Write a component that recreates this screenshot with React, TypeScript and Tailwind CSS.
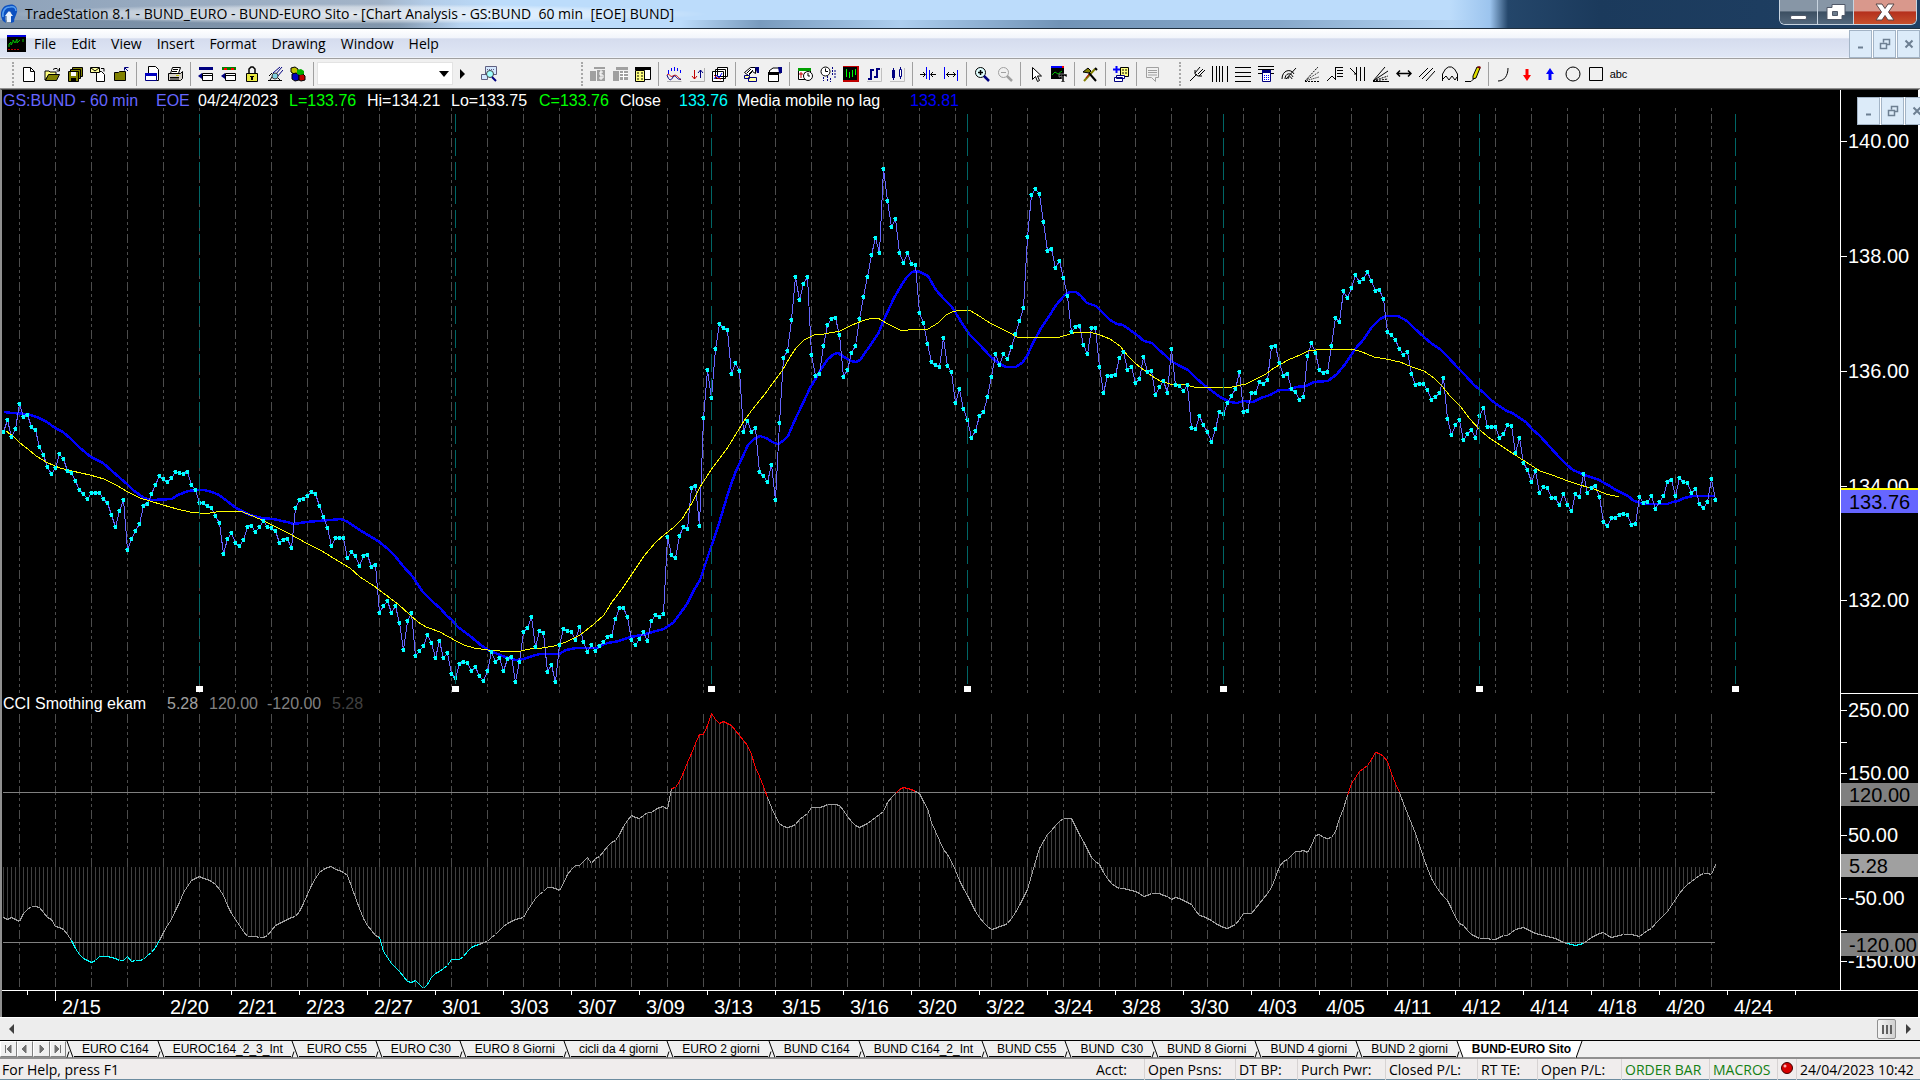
import React from "react";

// one price per bar, bars are 4px apart (values are chart y coordinates)
const PRICES = [
  432, 420, 437, 429, 404, 417, 415, 427, 430, 447, 455, 467, 474, 468, 454, 459, 471, 473, 481, 490,
  494, 499, 493, 493, 493, 499, 503, 515, 527, 511, 500, 550, 539, 531, 524, 506, 504, 494, 485, 476,
  479, 482, 478, 472, 473, 474, 472, 485, 490, 503, 503, 506, 508, 516, 523, 554, 539, 533, 543, 546,
  540, 527, 526, 532, 527, 521, 527, 528, 531, 543, 540, 539, 548, 508, 500, 499, 496, 492, 494, 506,
  517, 528, 546, 538, 538, 538, 558, 552, 556, 566, 556, 555, 567, 565, 613, 606, 601, 613, 606, 623,
  650, 621, 613, 656, 651, 646, 635, 643, 658, 641, 658, 653, 674, 678, 664, 662, 663, 671, 667, 676,
  681, 671, 652, 662, 658, 671, 659, 657, 682, 662, 632, 628, 617, 647, 631, 633, 672, 665, 682, 645,
  629, 631, 632, 640, 627, 642, 652, 645, 651, 646, 642, 637, 636, 619, 608, 608, 617, 640, 645, 639,
  632, 641, 621, 615, 617, 614, 537, 555, 558, 536, 527, 529, 488, 486, 526, 418, 370, 398, 349, 324,
  328, 330, 374, 363, 371, 432, 421, 432, 428, 472, 476, 482, 465, 500, 423, 358, 351, 320, 277, 300,
  284, 277, 355, 376, 374, 346, 325, 319, 318, 335, 377, 370, 353, 346, 319, 297, 277, 255, 238, 253,
  169, 201, 227, 219, 253, 263, 253, 264, 265, 313, 323, 344, 362, 365, 367, 338, 366, 372, 403, 389,
  409, 420, 438, 431, 416, 412, 397, 377, 354, 365, 354, 359, 347, 334, 321, 308, 237, 195, 189, 194,
  222, 251, 249, 268, 261, 278, 296, 332, 327, 326, 345, 354, 328, 328, 367, 393, 376, 376, 375, 358,
  352, 370, 367, 383, 379, 357, 372, 371, 395, 387, 381, 393, 349, 385, 386, 391, 385, 428, 429, 416,
  425, 432, 442, 429, 412, 414, 403, 396, 389, 372, 412, 411, 393, 393, 382, 384, 380, 347, 346, 363,
  376, 374, 389, 392, 400, 397, 356, 343, 353, 370, 373, 372, 346, 318, 322, 291, 298, 288, 275, 282,
  279, 272, 281, 291, 290, 299, 332, 335, 340, 349, 355, 352, 374, 385, 384, 384, 390, 400, 397, 393,
  378, 419, 435, 425, 420, 440, 434, 430, 438, 416, 408, 427, 427, 427, 438, 434, 425, 426, 453, 438,
  463, 470, 482, 471, 493, 487, 488, 498, 498, 505, 494, 505, 511, 494, 497, 474, 493, 488, 486, 497,
  522, 526, 518, 518, 515, 514, 515, 525, 524, 497, 503, 502, 496, 509, 502, 496, 482, 480, 496, 478,
  482, 483, 493, 489, 504, 508, 502, 479, 500,
];

const FAST_AVERAGE =
  "4,412 12,413 27,414 37,417 47,422 55,428 63,432 70,438 80,448 91,457 103,463 112,471 120,478 127,484 133,490 144,498 152,500 172,499 178,495 188,491 197,490 204,490 212,492 219,495 227,501 236,508 250,515 262,518 273,519 287,522 294,524 306,522 318,521 330,520 341,519 348,522 358,529 368,535 378,541 388,549 395,556 403,566 413,577 423,592 433,602 440,608 447,616 452,620 458,627 470,636 482,646 488,650 500,655 508,658 516,660 524,659 532,656 540,654 559,654 566,650 576,648 597,648 602,645 608,643 619,641 630,637 642,635 656,631 664,629 668,626 673,623 679,615 687,604 694,590 700,580 704,568 711,547 717,530 723,510 730,487 736,471 742,458 748,445 754,439 760,436 766,438 772,442 778,444 783,441 788,436 794,422 803,403 810,388 816,378 823,366 828,359 834,354 838,353 844,357 851,361 856,362 860,360 867,350 878,334 883,322 887,313 894,298 901,286 907,277 912,272 917,271 922,273 928,276 936,290 944,299 952,307 960,320 970,335 980,345 990,356 998,363 1006,367 1016,367 1022,363 1027,356 1033,343 1040,330 1048,318 1056,305 1064,296 1070,292 1076,292 1081,296 1087,303 1096,306 1104,314 1110,320 1117,324 1123,325 1130,330 1137,335 1144,341 1152,343 1159,350 1165,355 1171,361 1180,366 1188,370 1196,378 1204,385 1212,391 1220,397 1230,402 1237,403 1243,401 1253,402 1261,398 1270,395 1279,390 1288,390 1296,387 1306,386 1314,382 1328,381 1337,374 1346,363 1355,349 1364,339 1372,327 1380,319 1386,316 1398,316 1407,321 1414,328 1424,337 1432,344 1440,349 1448,357 1457,367 1465,375 1474,385 1484,393 1491,400 1499,406 1507,411 1512,413 1526,422 1532,429 1540,436 1550,447 1559,457 1566,464 1573,470 1580,473 1590,477 1597,479 1608,485 1616,490 1628,496 1634,501 1644,504 1667,504 1673,502 1678,501 1684,498 1693,496 1715,496";

const SLOW_AVERAGE =
  "6,431 14,437 20,443 28,449 36,456 48,463 60,468 72,471 90,475 104,479 116,485 128,492 140,498 150,501 163,505 177,509 190,512 200,513 210,513 222,511 240,511 248,514 262,520 276,527 290,534 306,543 322,551 338,561 350,568 360,577 374,586 386,595 398,604 410,615 418,622 426,627 440,632 456,641 464,645 474,648 488,650 500,651 516,652 530,649 542,648 554,646 566,642 580,635 594,624 604,615 612,602 622,589 632,574 644,556 656,542 664,535 674,527 682,519 692,503 700,487 711,470 720,458 728,447 736,434 744,421 752,410 760,400 765,394 772,384 782,371 790,357 796,348 804,340 814,335 824,334 840,331 852,325 862,321 872,318 878,318 886,323 900,330 908,330 916,329 928,329 938,323 946,315 952,312 960,310 969,310 976,314 990,323 1000,328 1010,333 1017,337 1040,338 1060,337 1070,334 1077,332 1090,332 1100,335 1110,339 1120,346 1128,356 1136,364 1144,370 1152,376 1160,381 1170,384 1186,385 1194,387 1232,387 1246,384 1256,379 1266,374 1274,368 1288,360 1300,355 1308,351 1316,350 1346,349 1352,349 1362,352 1374,357 1386,359 1400,362 1412,367 1424,371 1434,378 1442,386 1450,396 1460,406 1470,419 1480,430 1488,437 1500,445 1512,453 1526,462 1540,471 1552,475 1568,481 1580,485 1594,489 1606,494 1619,497";

const CCI =
  "3,917 7,919 11,917 19,921 24,911 32,905 39,907 47,917 51,919 55,926 64,929 72,942 78,953 84,959 91,962 95,960 99,956 109,956 119,960 123,960 127,956 131,961 137,960 144,959 148,954 153,950 158,942 164,930 171,919 178,904 184,890 192,879 199,876 204,879 208,879 211,881 216,885 222,893 229,910 237,922 244,933 247,936 256,936 262,937 268,934 276,924 286,919 292,916 296,916 302,905 308,892 313,881 318,873 324,868 331,866 336,870 341,870 348,876 353,892 359,908 365,923 374,934 380,937 383,951 390,962 400,972 407,981 411,982 416,979 420,986 424,988 428,983 432,975 441,970 447,965 451,959 460,959 471,947 484,942 488,940 495,934 504,925 515,919 523,917 529,907 536,896 543,891 548,886 554,887 560,890 564,881 568,872 576,864 580,865 584,859 588,856 591,863 596,857 600,855 604,849 611,842 616,840 624,824 631,815 635,817 640,818 647,812 651,812 657,808 662,805 667,809 671,788 676,787 681,777 688,760 696,741 699,734 704,734 707,725 711,713 716,721 720,723 723,721 731,725 739,735 746,743 751,754 755,767 760,778 767,797 772,810 780,825 785,827 790,826 796,823 800,818 806,814 811,807 820,807 826,804 838,804 842,808 848,818 856,826 859,827 867,823 880,813 884,810 888,799 894,794 901,787 909,788 919,793 927,808 931,822 937,835 943,849 949,857 955,870 961,885 968,897 976,913 984,923 991,929 1000,926 1007,923 1014,914 1021,901 1028,887 1033,867 1039,848 1047,834 1056,824 1063,818 1071,818 1078,832 1084,843 1092,859 1099,864 1104,874 1111,883 1120,889 1124,888 1137,892 1143,896 1151,893 1158,893 1167,896 1171,899 1176,896 1184,901 1191,904 1199,915 1208,918 1220,926 1227,928 1235,924 1243,913 1251,913 1260,902 1268,892 1273,883 1280,863 1288,858 1294,851 1304,850 1308,852 1316,832 1323,837 1329,839 1334,834 1339,818 1343,808 1349,788 1352,781 1359,771 1368,764 1375,752 1380,753 1388,762 1392,777 1399,792 1407,813 1414,830 1424,860 1431,878 1440,893 1448,901 1457,922 1464,926 1470,933 1479,938 1488,938 1493,940 1502,935 1508,935 1514,929 1524,927 1535,933 1553,937 1565,943 1574,945 1585,942 1594,935 1603,932 1611,937 1622,934 1633,934 1640,936 1644,932 1651,928 1657,921 1666,912 1676,897 1685,885 1697,876 1704,873 1711,874 1715,864";

const BAR_X = PRICES.map((_, i) => 3 + i * 4);
const GRID_X = Array.from({ length: 48 }, (_, i) => 19 + i * 36);
const CYCLE_X = Array.from({ length: 7 }, (_, i) => 199 + i * 256);
const TICK_X = Array.from({ length: 25 }, (_, i) => 163 + i * 68);

const DATES = [
  "2/20", "2/21", "2/23", "2/27", "3/01", "3/03", "3/07", "3/09", "3/13", "3/15", "3/16", "3/20",
  "3/22", "3/24", "3/28", "3/30", "4/03", "4/05", "4/11", "4/12", "4/14", "4/18", "4/20", "4/24",
];

const cciPoints = CCI.split(" ").map((p) => p.split(",").map(Number));

const cciAt = (x: number) => {
  const next = cciPoints.findIndex((p) => p[0] >= x);
  if (next <= 0) return cciPoints[0][1];
  const [x0, y0] = cciPoints[next - 1];
  const [x1, y1] = cciPoints[next];
  return Math.round(y0 + ((y1 - y0) * (x - x0)) / (x1 - x0));
};

const CCI_BARS = BAR_X.map((x) => ({ x, y: cciAt(x) }));

const cciSegments = (test: (y: number) => boolean) =>
  CCI_BARS.slice(1)
    .map((bar, i) => {
      const prev = CCI_BARS[i];
      return test((bar.y + prev.y) / 2)
        ? `M${prev.x + 0.5} ${prev.y + 0.5}L${bar.x + 0.5} ${bar.y + 0.5}`
        : "";
    })
    .join("");

const pricePath = "M" + PRICES.map((y, i) => `${BAR_X[i] + 0.5} ${y}`).join("L");
const markerPath = PRICES.map(
  (y, i) => `M${BAR_X[i] - 1} ${y - 2}h3v4h-3zM${BAR_X[i] - 2} ${y - 1}h1v1h-1z`
).join("");

const Grid = ({ top, bottom, offset }: { top: number; bottom: number; offset: number }) => (
  <path
    d={GRID_X.map((x) => `M${x + 0.5} ${top}V${bottom}`).join("")}
    stroke="#4c4c4c"
    strokeDasharray="9 3 3 3 3 3"
    strokeDashoffset={offset}
  />
);

const PriceChart = () => (
  <svg
    width="1838"
    height="586"
    viewBox="2 108 1838 586"
    fill="none"
    shapeRendering="crispEdges"
    className="block shrink-0"
    role="img"
    aria-label="GS:BUND 60 min"
  >
    <Grid top={108} bottom={693} offset={18} />
    <polyline points={FAST_AVERAGE} stroke="#0000ff" strokeWidth="2.5" />
    <path d={pricePath} stroke="#6666ff" />
    <polyline points={SLOW_AVERAGE} stroke="#ffff00" />
    <path d={markerPath} fill="#00ffff" />
    {CYCLE_X.map((x) => (
      <g key={x}>
        <path d={`M${x + 0.5} 114V684`} stroke="#006666" strokeDasharray="18 6" />
        <rect x={x - 3} y="686" width="7" height="6" fill="#fff" />
      </g>
    ))}
  </svg>
);

const CciChart = () => (
  <svg
    width="1838"
    height="276"
    viewBox="2 714 1838 276"
    fill="none"
    shapeRendering="crispEdges"
    className="block shrink-0 overflow-visible"
    role="img"
    aria-label="CCI Smothing ekam"
  >
    <Grid top={714} bottom={987} offset={0} />
    <path
      d={CCI_BARS.map((b) => `M${b.x + 0.5} ${b.y < 868 ? 868 : 867}V${b.y}`).join("")}
      stroke="#404040"
    />
    <path d="M3 792.5H1715M3 942.5H1715" stroke="#808080" />
    <path d={cciSegments((y) => y >= 792 && y <= 943)} stroke="#a0a0a0" />
    <path d={cciSegments((y) => y < 792)} stroke="#ff0000" />
    <path d={cciSegments((y) => y > 943)} stroke="#00ffff" />
  </svg>
);

const scaleLabels = [
  { y: 141, text: "140.00" },
  { y: 256, text: "138.00" },
  { y: 371, text: "136.00" },
  { y: 486, text: "134.00" },
  { y: 600, text: "132.00" },
  { y: 710, text: "250.00" },
  { y: 742, text: "" },
  { y: 773, text: "150.00" },
  { y: 835, text: "50.00" },
  { y: 898, text: "-50.00" },
  { y: 930, text: "" },
  { y: 961, text: "-150.00" },
];

const scaleBadges = [
  { y: 490, text: "133.76", fill: "#6666ff" },
  { y: 783, text: "120.00", fill: "#808080" },
  { y: 854, text: "5.28", fill: "#a0a0a0" },
  { y: 933, text: "-120.00", fill: "#808080" },
];

const PriceScale = () => (
  <svg
    width="78"
    height="900"
    viewBox="1840 90 78 900"
    className="block shrink-0 font-['Liberation_Sans',Arial,sans-serif] text-[20px]"
  >
    <path d="M1840.5 90V990M1840 693.5H1918" stroke="#fff" shapeRendering="crispEdges" />
    {scaleLabels.map(({ y, text }) => (
      <g key={y}>
        <path d={`M1841 ${y + 0.5}h6`} stroke="#fff" shapeRendering="crispEdges" />
        <text x="1848" y={y + 7} fill="#fff">{text}</text>
      </g>
    ))}
    <rect x="1841" y="488" width="77" height="2" fill="#ffff00" />
    {scaleBadges.map(({ y, text, fill }) => (
      <g key={y}>
        <rect x="1841" y={y} width="77" height="23" fill={fill} />
        <text x="1849" y={y + 19} fill="#000">{text}</text>
      </g>
    ))}
  </svg>
);

const DateScale = () => (
  <svg
    width="1838"
    height="26"
    viewBox="2 991 1838 26"
    className="block font-['Liberation_Sans',Arial,sans-serif] text-[20px]"
    fill="#fff"
  >
    <path
      d={"M27.5 991v4M55.5 991v10" + TICK_X.map((x) => `M${x + 0.5} 991v4`).join("")}
      stroke="#fff"
      shapeRendering="crispEdges"
    />
    <text x="62" y="1014">2/15</text>
    {DATES.map((date, i) => (
      <text key={date} x={TICK_X[i] + 7} y="1014">{date}</text>
    ))}
  </svg>
);

const page = <path d="M2.5 1.5h7l4 4v10h-11z" fill="#fff" stroke="#000" />;
const smallWindow = <path d="M1.5 7.5h11v7h-11z" fill="#fff" stroke="#000080" />;

const icons: Record<string, React.ReactNode> = {
  New: <>{page}<path d="M9.5 1.5v4h4" stroke="#000" /></>,
  Open: (
    <>
      <path d="M1 5h4l1 1h6v3H5l-4 5z" fill="#ffff80" stroke="#000" />
      <path d="M1.5 14.5l3-6h11l-3 6z" fill="#808000" stroke="#000" />
      <path d="M9 3.5l2-1h2l2 2M15.5 2v3h-3" stroke="#000" />
    </>
  ),
  "Save All": (
    <>
      <path d="M5.500 1.500h10v9h-10z" fill="#808000" stroke="#000" />
      <path d="M3.500 3.500h10v9h-10z" fill="#808000" stroke="#000" />
      <path d="M1.500 5.500h10v10h-10z" fill="#808000" stroke="#000" />
      <path d="M4 6h5v4H4z" fill="#fff" />
      <path d="M4 12h5v3H4z" fill="#000" />
    </>
  ),
  Send: (
    <>
      <path d="M6.500 5.500h5l3 3v7h-8z" fill="#fff" stroke="#000" />
      <path d="M.5 1.500h9v5h-9z" fill="#ffffa0" stroke="#000" />
      <path d="M1 2l4 3 4-3M11 2.500h3v3" stroke="#000" />
    </>
  ),
  Close: (
    <>
      <path d="M1.500 6.500h4l1-1h6v9h-11z" fill="#808000" stroke="#000" />
      <path d="M11.500 1.500h4M11.500 1.500v3M12 2l3 3" stroke="#000080" />
    </>
  ),
  "New Window": (
    <>
      <path d="M4.500.5h7l3 3v11h-10z" fill="#fff" stroke="#000" />
      {smallWindow}
      <path d="M1 7h12v3H1z" fill="#0000c0" />
    </>
  ),
  Print: (
    <>
      <path d="M5.500 1.500h8l-2 6h-8z" fill="#fff" stroke="#000" />
      <path d="M6 3.500h5M5 5.500h5" stroke="#000" />
      <path d="M1.500 7.500h12l2-2v7l-2 2h-12z" fill="#d4d0c8" stroke="#000" />
      <path d="M3 11.500h9M3 13h9" stroke="#000" />
      <path d="M9 9h3v1H9z" fill="#c0c000" />
    </>
  ),
  Workspace: (
    <>
      <path d="M1 1h14v3H1z" fill="#000080" />
      <path d="M4.500 7.500h10v7h-10zM4 9.500h11" stroke="#000" fill="#fff" />
      <path d="M0 10l4-3v6z" fill="#000080" />
    </>
  ),
  Desktop: (
    <>
      <path d="M1 1h14v3H1z" fill="#008000" />
      <path d="M3 2h3v2H3zM10 2h3v2h-3z" fill="#f00" />
      <path d="M4.500 7.500h10v7h-10zM4 9.500h11" stroke="#000" fill="#fff" />
      <path d="M0 10l4-3v6z" fill="#000080" />
    </>
  ),
  Lock: (
    <>
      <path d="M5 7V3l2-2h2l2 2v4" stroke="#000" strokeWidth="1.500" />
      <path d="M2.500 7.500h11v8h-11z" fill="#e8e840" stroke="#000" />
      <path d="M6 10h4v1H9v3H7v-3H6z" fill="#000" />
    </>
  ),
  Satellite: (
    <>
      <path d="M8 9l7-8M6 7l7-6M10 11l6-7" stroke="#000080" />
      <path d="M1 14.500h14M3 14l4-6 6 6M2 10l3-3" stroke="#000" />
      <circle cx="8" cy="10" r="3" fill="#80d0e0" stroke="#404040" />
    </>
  ),
  Cubes: (
    <>
      <path d="M1 2l4-1 3 2v4l-4 1-3-2z" fill="#c0c000" stroke="#000" />
      <path d="M2 8l4-1 3 2v5l-4 1-3-2z" fill="#0000c0" stroke="#000" />
      <path d="M9 9l4-1 2 2v4l-4 1-2-1z" fill="#c00000" stroke="#000" />
      <path d="M7 4l4-1 3 2v3l-4 1-3-1z" fill="#00b000" />
    </>
  ),
  "Symbol Lookup": (
    <>
      <path d="M4.500.5h11v8h-11zM.5 8.500h6v5h-6z" fill="#d4e8ff" stroke="#606080" />
      <path d="M6 3.500h8" stroke="#606080" strokeDasharray="1 1" />
      <circle cx="9" cy="8" r="3.500" fill="#a0ffff" stroke="#404040" />
      <path d="M11 11l4 4" stroke="#000080" strokeWidth="2" />
    </>
  ),
  "Trade Bar": (
    <>
      <path d="M1 5h6v10H1zM5 1h11v2H5zM8 4h8v11H8z" fill="#a0a0a0" />
      <path d="M14 6h-3v3h3v3h-4M12 4v10" stroke="#fff" />
    </>
  ),
  "Order Bar": (
    <>
      <path d="M1 5h6v10H1zM4 1h12v3H4zM8 5h8v9H8z" fill="#a0a0a0" />
      <path d="M8 7.500h8M8 10.500h8M11.500 5v9" stroke="#fff" />
    </>
  ),
  "Data Window": (
    <>
      <path d="M4.500 1.500h11v12h-11z" fill="#fff" stroke="#000" />
      <path d="M.5 4.500h9v11h-9z" fill="#ffff80" stroke="#000" />
      <path d="M0 1h16v3H0z" fill="#000" />
      <path d="M2 7h2M6 7h2M2 10h2M6 10h2M2 13h2M6 13h2" stroke="#000" />
    </>
  ),
  Indicator: (
    <>
      <path d="M1 9c2-3 3 3 6 1s4 0 8 4" stroke="#c00000" />
      <path d="M1 9c2 6 4 6 6 2s4 4 8 2" stroke="#000080" />
      <path d="M2.500 4v4M5.500 2v3M8.500 1v4M11.500 2v3M14.500 4v3" stroke="#0000ff" />
      <path d="M1 15.500h14.500" stroke="#b0b0b0" />
    </>
  ),
  Strategy: (
    <>
      <path d="M5.500 4v9M3 10l2.500 3L8 10" stroke="#c00000" />
      <path d="M11.500 12V4M9 7l2.500-3L14 7" stroke="#000080" />
      <path d="M1 15.500h14.500V2" stroke="#b0b0b0" />
    </>
  ),
  "Analysis Techniques": (
    <>
      <path d="M5.500 1.500h10v9h-10zM3.500 3.500h10v9h-10zM.5 5.500h11v10H.5z" fill="#fff" stroke="#000" />
      <path d="M2 13l3-4 2 3 3-5" stroke="#0000ff" />
      <path d="M2 9l3 3 4 1" stroke="#c00000" />
    </>
  ),
  "Format Symbol": (
    <>
      <path d="M1.500 6.500l6-5h5v6l-3-2-4 4z" fill="#fff" stroke="#000" />
      <path d="M4 7l4-4M6 8l4-4" stroke="#000" />
      <path d="M12 1h4v6h-2z" fill="#000080" />
      <path d="M1.500 9.500h5v3h-5zM5.500 11.500h8v4h-8z" fill="#ffffa0" stroke="#000080" />
    </>
  ),
  "Format Window": (
    <>
      <path d="M3 5l4-3h8v5H5z" fill="#fff" stroke="#000" />
      <path d="M12 1h4v6h-3z" fill="#000080" />
      <path d="M2.500 6.500h10v9h-10z" fill="#fff" stroke="#000" />
      <path d="M2 6h11v3H2z" fill="#000" />
    </>
  ),
  Calendar: (
    <>
      <path d="M1.500 3.500h12v10h-12z" fill="#fff" stroke="#000" />
      <path d="M1 2h13v3H1z" fill="#00a000" />
      <path d="M3 7h2v2H3zM7 7h2M3 11h2" stroke="#c00000" />
      <circle cx="11" cy="10" r="4.500" fill="#fff" stroke="#000" />
      <path d="M11 7v3h2" stroke="#000" />
    </>
  ),
  Session: (
    <>
      <circle cx="5.500" cy="5.500" r="4.500" fill="#fff" stroke="#000" />
      <path d="M5.500 2.500v3H8" stroke="#000" />
      <path d="M12.500 1v9M15 4v9M3.500 11v4M7.500 10v5M10.500 12v4" stroke="#000080" strokeDasharray="2 1" />
    </>
  ),
  "Chart Type": (
    <>
      <path d="M0 0h16v16H0z" fill="#c00000" />
      <path d="M0 1h14v13H0z" fill="#000" />
      <path d="M3.500 3v8M6.500 6v6M9.500 4v7M12.500 3v6" stroke="#00ff00" />
    </>
  ),
  "OHLC Bar": (
    <>
      <path d="M5 3v11M11 2v10M2 13h3M5 4h3M8 11h3M11 3h3" stroke="#000080" strokeWidth="2" />
      <path d="M1 15.500h14.500V2" stroke="#c0c0c0" />
    </>
  ),
  Candlestick: (
    <>
      <path d="M4.500 2v12M11.500 1v12" stroke="#000080" />
      <path d="M3 4h3v8H3z" fill="#000080" />
      <path d="M10.500 3.500h2v7h-2z" fill="#fff" stroke="#000080" />
      <path d="M1 15.500h14.500V2" stroke="#c0c0c0" />
    </>
  ),
  "Decrease Spacing": (
    <>
      <path d="M6.500 1v12M9.500 4v10" stroke="#0000ff" />
      <path d="M0 8.500h5M11 8.500h5M3 6l2.500 2.500L3 11M13 6l-2.500 2.500L13 11" stroke="#000" />
    </>
  ),
  "Increase Spacing": (
    <>
      <path d="M1.500 1v12M14.500 4v11" stroke="#0000ff" />
      <path d="M3 8.500h10M6 6L3.500 8.500 6 11M10 6l2.500 2.500L10 11" stroke="#000" />
    </>
  ),
  "Zoom In": (
    <>
      <circle cx="6.500" cy="6.500" r="5" fill="#e0ffff" stroke="#000" />
      <path d="M4 6.500h5M6.500 4v5" stroke="#000" strokeWidth="1.500" />
      <path d="M10 10l5 5" stroke="#000080" strokeWidth="2.500" />
    </>
  ),
  "Zoom Out": (
    <>
      <circle cx="6.500" cy="6.500" r="5" stroke="#a0a0a0" />
      <path d="M4 6.500h5" stroke="#a0a0a0" />
      <path d="M10 10l5 5" stroke="#a0a0a0" strokeWidth="2.500" />
    </>
  ),
  Pointer: <path d="M4.500 1.500v12l3-3 2 5 2-1-2-4.500h4z" fill="#fff" stroke="#000" />,
  "Text Pointer": (
    <>
      <path d="M0 1h13v12H0z" fill="#000" />
      <path d="M0 0h11v2H0z" fill="#0000ff" />
      <path d="M11 0h2v2h-2z" fill="#f00" />
      <path d="M1 9l3-3 3 2 4-3" stroke="#00c000" />
      <path d="M8 8h8v3h-1l-1-1h-1v5h1v1h-4v-1h1v-5h-1l-1 1H8z" fill="#000" stroke="#efefef" strokeWidth=".5" />
    </>
  ),
  Hammer: (
    <>
      <path d="M2 15L13 3" stroke="#808000" strokeWidth="2" />
      <path d="M1 6l5-4 3 3-2 2z" fill="#808000" stroke="#000" />
      <path d="M7 7l7 8M13 2l2 2" stroke="#000" strokeWidth="2" />
      <path d="M4 12l3-4" stroke="#c00000" />
    </>
  ),
  "Add Data": (
    <>
      <path d="M7.500 1.500h8v9h-8z" fill="#ffff80" stroke="#000" />
      <path d="M9 4h2M12 4h2M9 7h2M12 7h2" stroke="#000" />
      <path d="M3.500 9.500h8v3h-8zM1.500 11.500h8v4h-8z" fill="#fff" stroke="#000080" />
      <path d="M3.500 0v7M0 3.500h7" stroke="#0000ff" strokeWidth="2" />
    </>
  ),
  Note: (
    <>
      <path d="M2.500 1.500h12v10h-3v4l-4-4h-5z" stroke="#a0a0a0" fill="#f0f0f0" />
      <path d="M4 4.500h9M4 6.500h9M4 9h9" stroke="#a0a0a0" />
    </>
  ),
  Pitchfork: <path d="M1 15l7-7M6 4v4l3 2h4M6 7l5-6M9 8l5-5M10 10l6-6" stroke="#000" />,
  "Vertical Grid": <path d="M.5 0v16M4.500 0v16M7.500 0v16M10.500 0v16M15.500 0v16" stroke="#000" />,
  "Horizontal Grid": <path d="M0 1.500h16M0 6.500h16M0 10.500h16M0 15.500h16" stroke="#000" />,
  Calculator: (
    <>
      <path d="M0 .5h16M0 3.500h16M0 7.500h4M12 7.500h4" stroke="#000" />
      <path d="M4.500 4.500h8v11h-8z" fill="#fff" stroke="#000080" />
      <path d="M4 4h9v3H4z" fill="#000080" />
      <path d="M6 9.500h6M6 11.500h6M6 13.500h6" stroke="#0000ff" strokeDasharray="1 1" />
    </>
  ),
  "Fibonacci Arcs": <path d="M1 13c0-9 9-11 12-5M4 13c0-6 6-7 8-2M7 13c0-3 3-3 4 0M5 13L15 2" stroke="#000" />,
  "Fibonacci Fan": (
    <>
      <path d="M1 15.500h14M1 15L14 1" stroke="#000" strokeDasharray="2 1" />
      <path d="M1 15l14-9M1 15l14-4" stroke="#000" strokeDasharray="1 1" />
    </>
  ),
  "Fibonacci Retracement": (
    <path d="M0 15l5-5 3 3M8.500 14V1M9 1.500h7M10 4.500h6M10 7.500h6M10 10.500h6" stroke="#000" />
  ),
  "Fibonacci Time": <path d="M0 2l6 6M6.500 1v14M10.500 1v14M14.500 1v14M4 8h2" stroke="#000" />,
  "Gann Fan": (
    <>
      <path d="M0 15.500h16M0 15L12 1M0 15L15 5" stroke="#000" />
      <path d="M0 15l15-5M0 15l15-2" stroke="#000" strokeDasharray="2 1" />
    </>
  ),
  "Horizontal Line": <path d="M1 7.500h14M4 4.500l-3 3 3 3M12 4.500l3 3-3 3" stroke="#000" strokeWidth="1.500" />,
  "Parallel Lines": <path d="M0 11L9 2M3 13L14 2M7 15l9-10" stroke="#000" />,
  Cycle: <path d="M.5 15V8l3-5 3-2h3l3 2 3 5v7M1 13l3-3 3 4 3-4 3 4 2-3" stroke="#000" />,
  Pencil: (
    <>
      <path d="M8 10l4-9 3 1-4 10-3 1z" fill="#e0e000" stroke="#000" />
      <path d="M12 1l2-1 2 1-1 2z" fill="#800000" />
      <path d="M0 15.500h6l3-3" stroke="#000" />
    </>
  ),
  Arc: <path d="M2 15c6 0 10-5 10-13" stroke="#000" />,
  "Down Arrow": <path d="M6.500 3h3v6H12l-4 6-4-6h2.500z" fill="#f00" />,
  "Up Arrow": <path d="M6.500 14h3V8H12L8 2 4 8h2.500z" fill="#00f" />,
  Ellipse: <circle cx="8" cy="8" r="7" stroke="#000" />,
  Rectangle: <path d="M1.500 1.500h13v13h-13z" stroke="#000" />,
};

const ToolButton = ({ name }: { name: string }) => (
  <button type="button" aria-label={name} className="flex h-6 w-[23px] shrink-0 items-center justify-center">
    <svg width="16" height="16" viewBox="0 0 16 16" fill="none" className="block">
      {icons[name]}
    </svg>
  </button>
);

const ToolGroups = ({ groups }: { groups: string[][] }) => (
  <>
    {groups.map((group, i) => (
      <React.Fragment key={group[0]}>
        {i > 0 && <Separator />}
        {group.map((name) => (
          <ToolButton key={name} name={name} />
        ))}
      </React.Fragment>
    ))}
  </>
);

const Separator = () => (
  <span className="flex h-6 w-2 shrink-0 justify-center">
    <span className="w-px bg-[#a0a0a0]" />
  </span>
);

const Handle = () => (
  <span className="h-6 w-[3px] shrink-0 border-l-2 border-dotted border-[#a8a8a8]" />
);

const mainTools = [
  ["New", "Open", "Save All", "Send", "Close"],
  ["New Window", "Print"],
  ["Workspace", "Desktop", "Lock", "Satellite", "Cubes"],
];

const chartTools = [
  ["Trade Bar", "Order Bar", "Data Window"],
  ["Indicator", "Strategy", "Analysis Techniques"],
  ["Format Symbol", "Format Window"],
  ["Calendar", "Session", "Chart Type", "OHLC Bar", "Candlestick"],
  ["Decrease Spacing", "Increase Spacing"],
  ["Zoom In", "Zoom Out"],
  ["Pointer", "Text Pointer"],
  ["Hammer"],
  ["Add Data"],
  ["Note"],
];

const drawingTools = [
  [
    "Pitchfork", "Vertical Grid", "Horizontal Grid", "Calculator", "Fibonacci Arcs", "Fibonacci Fan",
    "Fibonacci Retracement", "Fibonacci Time", "Gann Fan", "Horizontal Line", "Parallel Lines", "Cycle", "Pencil",
  ],
  ["Arc", "Down Arrow", "Up Arrow", "Ellipse", "Rectangle"],
];

const TitleBar = () => (
  <header className="relative flex h-[29px] items-center border-b border-[#20303f] bg-[linear-gradient(90deg,#8fa3ba_0,#a3b4c8_380px,#b2cbe6_425px,#bcdcfb_500px,#bcdcfb_1450px,#9cc4ee_1490px,#24466a_1508px,#1b3a5c_1600px,#1f4064_100%)]">
    <div className="absolute inset-x-0 bottom-0 h-2 bg-[linear-gradient(90deg,#60789080_0,#60789080_400px,#8fb4d800_460px,#8fb4d800_680px,#44688e90_760px,#6c94bc30_900px,#44688ea0_1060px,#44688e70_1280px,#8fb4d800_1480px)]" />
    <div className="absolute left-2 top-1 h-5 w-[700px] bg-[radial-gradient(closest-side,#ffffffb0,#ffffff70_70%,#ffffff00)]" />
    <svg width="18" height="22" viewBox="0 0 18 22" className="relative block shrink-0">
      <path d="M3 18C-1 12 1 3 8 2c6-2 10 2 9 7-1 4-3 6-3 10l-3 1c-1-4 1-7 0-11-4-1-7 4-5 11z" fill="#0c50c0" />
      <path d="M3 14C2 8 5 4 10 4c4-1 6 1 6 4" stroke="#58a0f0" strokeWidth="1.500" fill="none" />
      <path d="M7 19v-6H5l4-5 4 5h-2v6z" fill="#e8f2ff" />
    </svg>
    <h1 className="relative ml-[7px] whitespace-pre font-['Open_Sans',sans-serif] text-[14px] leading-5 text-black">
      {"TradeStation 8.1 - BUND_EURO - BUND-EURO Sito - [Chart Analysis - GS:BUND  60 min  [EOE] BUND]"}
    </h1>
    <div className="relative mr-[3px] ml-auto flex h-[25px] self-start overflow-hidden rounded-b-md border border-t-0 border-[#c8d4e0]">
      <button type="button" aria-label="Minimize" className="flex w-[38px] items-end justify-center border-r border-[#c8d4e0] bg-[linear-gradient(#8796a6_45%,#3c4f62_50%,#54687c)] pb-1">
        <span className="h-[5px] w-[17px] rounded-xs border border-[#505868] bg-white" />
      </button>
      <button type="button" aria-label="Restore" className="flex w-9 items-center justify-center border-r border-[#c8d4e0] bg-[linear-gradient(#8796a6_45%,#3c4f62_50%,#54687c)]">
        <svg width="20" height="18" viewBox="0 0 20 18" fill="none" className="block">
          <path d="M6 1.500h13v11h-3v4H1v-12h5z" fill="#fff" stroke="#505868" />
          <path d="M6.500 8.500h5v4h-5z" fill="#6c7c8c" stroke="#505868" />
        </svg>
      </button>
      <button type="button" aria-label="Close window" className="flex w-[62px] items-center justify-center bg-[linear-gradient(#d9988c_45%,#b5301c_50%,#c8502c)]">
        <svg width="20" height="18" viewBox="0 0 20 18" className="block">
          <path d="M1 1h6l3 4.500L13 1h6l-5.500 8 5.500 8h-6l-3-4.500L7 17H1l5.500-8z" fill="#fff" stroke="#584848" />
        </svg>
      </button>
    </div>
  </header>
);

const mdiGlyphs: Record<string, React.ReactNode> = {
  Minimize: <path d="M3 8.500h5v2H3z" fill="#6d7f92" />,
  Restore: <path d="M4.500 4.500v-3h6v5h-3M1.500 5.500h6v5h-6z" stroke="#6d7f92" strokeWidth="1.500" fill="none" />,
  Close: <path d="M2.500 2.500l7 7M9.500 2.500l-7 7" stroke="#6d7f92" strokeWidth="2" />,
};

const MdiButtons = ({ target }: { target: string }) => (
  <div className="flex h-7 shrink-0 gap-px bg-white">
    {Object.keys(mdiGlyphs).map((name) => (
      <button
        key={name}
        type="button"
        aria-label={`${name} ${target}`}
        className="flex w-[23px] shrink-0 items-center justify-center border border-[#a3b4c6] bg-[#dcebf9]"
      >
        <svg width="12" height="12" viewBox="0 0 12 12" className="block">{mdiGlyphs[name]}</svg>
      </button>
    ))}
  </div>
);

const menus = ["File", "Edit", "View", "Insert", "Format", "Drawing", "Window", "Help"];

const MenuBar = () => (
  <nav className="flex h-[30px] items-center border-b border-[#a0a0a0] bg-[linear-gradient(#ffffff_0,#f2f5fb_30%,#d5dcee_34%,#e0e7f5_95%,#f4f6fb)]">
    <svg width="19" height="17" viewBox="0 0 19 17" className="ml-[7px] block shrink-0">
      <path d="M0 0h19v17H0z" fill="#000" />
      <path d="M0 0h19v2H0z" fill="#0000e0" />
      <path d="M2 12v-3l2-2v3l2-3V5l2 3 2-4v4l3-3M16 4v3" stroke="#00c000" fill="none" />
      <path d="M1 14.500h12" stroke="#c00000" strokeDasharray="2 1" />
    </svg>
    <div className="ml-2 flex grow gap-[15px] font-['Open_Sans',sans-serif] text-[14px] leading-5 text-black">
      {menus.map((menu) => (
        <button key={menu} type="button">{menu}</button>
      ))}
    </div>
    <MdiButtons target="chart" />
  </nav>
);

const ToolBar = () => (
  <div className="flex h-[30px] items-center border-b border-[#909090] bg-[#f0f0f0]">
    <div className="flex w-[581px] shrink-0 items-center pl-3">
      <Handle />
      <span className="w-[2px]" />
      <ToolGroups groups={mainTools} />
      <Separator />
      <select aria-label="Symbol" className="h-[23px] w-[136px] shrink-0 appearance-none border border-[#e3e3e3] bg-white" />
      <svg width="36" height="16" viewBox="0 0 36 16" className="-ml-[16px] block shrink-0">
        <path d="M2 5h10l-5 6z" fill="#000" />
        <path d="M23 3v10l5-5z" fill="#000" />
      </svg>
      <span className="w-1" />
      <ToolButton name="Symbol Lookup" />
    </div>
    <div className="flex w-[598px] shrink-0 items-center">
      <Handle />
      <span className="w-px" />
      <ToolGroups groups={chartTools} />
    </div>
    <div className="flex items-center">
      <Handle />
      <span className="w-[3px]" />
      <ToolGroups groups={drawingTools} />
      <button type="button" className="w-[23px] text-center font-['Liberation_Sans',sans-serif] text-[11px] leading-4 text-black">
        abc
      </button>
    </div>
  </div>
);

const ChartWindow = () => (
  <main className="relative border-t border-r-2 border-l-2 border-t-[#404040] border-r-white border-l-[#909090] bg-black font-['Liberation_Sans',Arial,sans-serif] text-white">
    <div className="flex">
      <div className="min-w-0 grow overflow-hidden">
        <div className="grid h-[18px] grid-cols-[153px_42px_91px_78px_84px_88px_81px_59px_58px_173px_auto] items-start pl-px text-[16px] leading-[22px] whitespace-nowrap">
          <span className="text-[#6666ff]">GS:BUND - 60 min</span>
          <span className="text-[#6666ff]">EOE</span>
          <span>04/24/2023</span>
          <span className="text-[#00ff00]">L=133.76</span>
          <span>Hi=134.21</span>
          <span>Lo=133.75</span>
          <span className="text-[#00ff00]">C=133.76</span>
          <span>Close</span>
          <span className="text-[#00ffff]">133.76</span>
          <span>Media mobile no lag</span>
          <span className="text-[#0000ff]">133.81</span>
        </div>
        <PriceChart />
        <div className="grid h-5 grid-cols-[164px_42px_58px_65px_auto] pl-px text-[16px] leading-5 whitespace-nowrap">
          <span>CCI Smothing ekam</span>
          <span className="text-[#a0a0a0]">5.28</span>
          <span className="text-[#808080]">120.00</span>
          <span className="text-[#808080]">-120.00</span>
          <span className="text-[#404040]">5.28</span>
        </div>
        <CciChart />
      </div>
      <PriceScale />
    </div>
    <div className="overflow-hidden border-t border-white">
      <DateScale />
    </div>
    <div className="absolute top-[7px] -right-[2px] w-[63px] overflow-hidden">
      <MdiButtons target="window" />
    </div>
  </main>
);

const ScrollBar = () => (
  <div className="flex h-[23px] items-center border-t border-white bg-[#ededed]">
    <button type="button" aria-label="Scroll left" className="flex w-6 justify-center">
      <svg width="6" height="10" viewBox="0 0 6 10" className="block"><path d="M5 0v10L0 5z" fill="#404040" /></svg>
    </button>
    <button type="button" aria-label="Scroll position" className="ml-auto flex h-5 w-[19px] items-center justify-center gap-[2px] rounded-xs border border-[#909090] bg-[linear-gradient(90deg,#f4f4f4,#d0d0d0)]">
      <span className="h-[9px] w-[2px] bg-[#606060]" />
      <span className="h-[9px] w-[2px] bg-[#606060]" />
      <span className="h-[9px] w-[2px] bg-[#606060]" />
    </button>
    <button type="button" aria-label="Scroll right" className="flex w-6 justify-center">
      <svg width="6" height="10" viewBox="0 0 6 10" className="block"><path d="M1 0v10l5-5z" fill="#404040" /></svg>
    </button>
  </div>
);

const tabs = [
  "EURO C164", "EUROC164_2_3_Int", "EURO C55", "EURO C30", "EURO 8 Giorni", "cicli da 4 giorni",
  "EURO 2 giorni", "BUND C164", "BUND C164_2_Int", "BUND C55", "BUND  C30", "BUND 8 Giorni",
  "BUND 4 giorni", "BUND 2 giorni",
];

const Slash = ({ fill = "#f0f0f0" }: { fill?: string }) => (
  <svg width="8" height="17" viewBox="0 0 8 17" className="block shrink-0">
    <path d="M1 0l6 16.500h1V0z" fill={fill} />
    <path d="M1 0l6 16.500M1 16.500l2-6" stroke="#000" fill="none" />
  </svg>
);

const navArrows = ["M8 3v8L4 7zM2.500 3v8", "M7 3v8L3 7z", "M4 3v8l4-4z", "M3 3v8l4-4zM8.500 3v8"];
const navNames = ["First tab", "Previous tab", "Next tab", "Last tab"];

const TabBar = () => (
  <div className="flex h-[19px] border-t border-b-2 border-t-black border-b-[#909090] bg-[#f0f0f0] font-['Liberation_Sans',Arial,sans-serif] text-[12px] leading-[14px] text-black">
    <div className="flex w-[66px] shrink-0">
      {navArrows.map((d, i) => (
        <button key={d} type="button" aria-label={navNames[i]} className="flex grow items-center justify-center border border-t-white border-r-[#808080] border-b-[#808080] border-l-white">
          <svg width="11" height="14" viewBox="0 0 11 14" className="block"><path d={d} fill="#707070" stroke="#707070" /></svg>
        </button>
      ))}
    </div>
    {tabs.map((tab) => (
      <React.Fragment key={tab}>
        <Slash />
        <button type="button" className="border-b border-black px-2 whitespace-pre">{tab}</button>
      </React.Fragment>
    ))}
    <Slash fill="#ffffff" />
    <button type="button" className="bg-white pr-1 pl-2 font-bold">BUND-EURO Sito</button>
    <svg width="8" height="17" viewBox="0 0 8 17" className="block shrink-0">
      <path d="M0 0h7L1 17H0z" fill="#fff" />
      <path d="M7 0L1 17" stroke="#000" />
    </svg>
  </div>
);

const StatusBar = () => (
  <footer className="flex h-[21px] items-start border-b border-[#6c8ca0] bg-[#f0eded] font-['Open_Sans',sans-serif] text-[14px] leading-[22px] whitespace-nowrap text-black">
    <span className="grow pl-[2px]">For Help, press F1</span>
    <div className="grid h-full grid-cols-[48px_91px_62px_88px_92px_60px_84px_88px_68px_19px_124px]">
      <span>Acct:</span>
      <span className="border-l border-[#d7d3d3] pl-[3px]">Open Psns:</span>
      <span className="border-l border-[#d7d3d3] pl-[3px]">DT BP:</span>
      <span className="border-l border-[#d7d3d3] pl-[3px]">Purch Pwr:</span>
      <span className="border-l border-[#d7d3d3] pl-[3px]">Closed P/L:</span>
      <span className="border-l border-[#d7d3d3] pl-[3px]">RT TE:</span>
      <span className="border-l border-[#d7d3d3] pl-[3px]">Open P/L:</span>
      <span className="border-l border-[#d7d3d3] pl-[3px] text-[#138013]">ORDER BAR</span>
      <span className="border-l border-[#d7d3d3] pl-[3px] text-[#138013]">MACROS</span>
      <span className="flex justify-center border-l border-[#d7d3d3] pt-[3px]">
        <svg width="12" height="12" viewBox="0 0 12 12" className="block">
          <circle cx="6" cy="6" r="5.500" fill="#d80000" stroke="#400000" />
          <circle cx="4" cy="4" r="1.500" fill="#ffb0b0" />
        </svg>
      </span>
      <span className="border-l border-[#d7d3d3] pl-[3px]">24/04/2023 10:42</span>
    </div>
  </footer>
);

const App = () => (
  <div className="flex w-full flex-col overflow-hidden bg-[#f0f0f0]">
    <TitleBar />
    <MenuBar />
    <ToolBar />
    <ChartWindow />
    <ScrollBar />
    <TabBar />
    <StatusBar />
  </div>
);

export default App;
